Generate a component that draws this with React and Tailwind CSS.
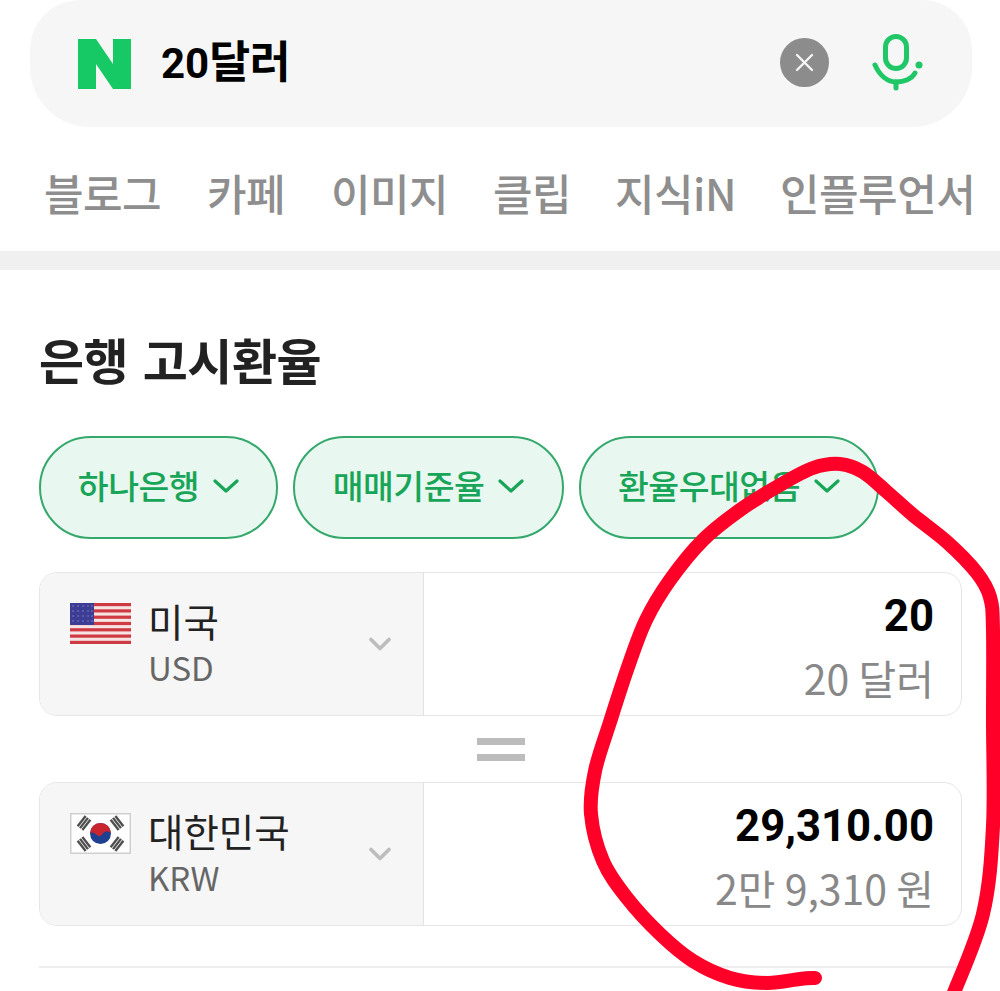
import React from 'react';
import { ChevronDown } from 'lucide-react';

const kr = "font-['Noto_Sans_CJK_KR','Noto_Sans',sans-serif]";
const num = "font-['Roboto','Noto_Sans_CJK_KR',sans-serif]";

const tabs = [
  { label: '블로그', w: 'w-[118px]' },
  { label: '카페', w: 'w-[79px]' },
  { label: '이미지', w: 'w-[117px]' },
  { label: '클립', w: 'w-[77px]' },
  { label: '지식iN', w: 'w-[120px]' },
  { label: '인플루언서', w: 'w-[198px]' },
];

// marker stroke, walked from its tail around the converter
const markerPoints = [
  [815, 978], [800, 979], [767, 983], [730, 978], [693, 961], [660, 934], [627, 898], [603, 861], [591, 814],
  [595, 771], [610, 722], [628, 667], [646, 620], [670, 580], [703, 540], [740, 510], [780, 485], [813, 468],
  [840, 464], [863, 472], [887, 492], [913, 515], [947, 542], [977, 573], [990, 597], [993, 630], [993, 720],
  [993, 826], [983, 914], [953, 995],
];

const smoothPath = (pts) => {
  let d = `M${pts[0][0]} ${pts[0][1]}`;
  for (let i = 0; i < pts.length - 1; i++) {
    const p0 = pts[i - 1] || pts[i];
    const p1 = pts[i];
    const p2 = pts[i + 1];
    const p3 = pts[i + 2] || p2;
    d += `C${p1[0] + (p2[0] - p0[0]) / 6} ${p1[1] + (p2[1] - p0[1]) / 6} ${p2[0] - (p3[0] - p1[0]) / 6} ${p2[1] - (p3[1] - p1[1]) / 6} ${p2[0]} ${p2[1]}`;
  }
  return d;
};

const NaverLogo = () => (
  <svg width="53" height="50" viewBox="0 0 53 50">
    <path fill="#17c964" d="M0 0h18l17 25V0h18v50H35L18 25v25H0z" />
  </svg>
);

const MicIcon = () => (
  <svg width="54" height="64" viewBox="0 0 54 64" fill="none" stroke="#1fc766" strokeLinecap="round" strokeWidth="5">
    <rect x="15.500" y="4.500" width="21" height="32" rx="10.500" />
    <path d="M5 33C10 44 18 50 26 50C34 50 42 47 45 41" />
    <path d="M26 50v6" />
    <circle cx="49" cy="33" r="3.500" fill="#1fc766" stroke="none" />
  </svg>
);

const ClearIcon = () => (
  <span className="mb-[3px] flex h-[49px] w-[49px] items-center justify-center rounded-full bg-[#8c8c8c]">
    <svg width="19" height="19" viewBox="0 0 19 19" stroke="#f5f5f5" strokeWidth="2.400" strokeLinecap="round">
      <path d="M2 2l15 15M17 2L2 17" />
    </svg>
  </span>
);

const UsFlag = () => (
  <svg width="61" height="41" viewBox="0 0 61 41" className="shrink-0">
    <rect width="61" height="41" fill="#f6e4e4" />
    {[0, 1, 2, 3, 4, 5, 6].map((i) => (
      <rect key={i} y={i * 6.300} width="61" height="3.200" fill="#cf3a42" />
    ))}
    <rect width="24" height="22" fill="#3d3d96" />
    {[3, 8, 13, 18].map((y) =>
      [3, 8, 13, 18, 22].map((x) => <circle key={`${x}-${y}`} cx={x} cy={y} r="0.900" fill="#6a6ab0" />)
    )}
  </svg>
);

const Trigram = ({ x, y, angle }) => (
  <g transform={`translate(${x} ${y}) rotate(${angle})`} fill="#4f4f4f">
    <rect x="-6.500" y="-4.200" width="13" height="2.400" />
    <rect x="-6.500" y="-1.200" width="13" height="2.400" />
    <rect x="-6.500" y="1.800" width="13" height="2.400" />
  </g>
);

const KrFlag = () => (
  <svg width="61" height="41" viewBox="0 0 61 41" className="shrink-0">
    <rect x="0.750" y="0.750" width="59.500" height="39.500" fill="#fff" stroke="#cfcfcf" strokeWidth="1.500" />
    <circle cx="30.500" cy="20.500" r="10.500" fill="#1f3f8f" />
    <path d="M20 20.500a10.500 10.500 0 0 1 21 0c-2.500-3-6-3-8 0s-5 3-7 1-3.500-3-6-1z" fill="#c9252f" />
    <Trigram x={14} y={10} angle={-52} />
    <Trigram x={47} y={10} angle={52} />
    <Trigram x={14} y={31} angle={52} />
    <Trigram x={47} y={31} angle={-52} />
  </svg>
);

const Pill = ({ label, w }) => (
  <button className={`flex h-[103px] items-center justify-center gap-[14px] rounded-full border-2 border-[#35a86c] bg-[#e8f7ef] pb-[4px] ${w}`}>
    <span className={`${kr} text-[33.500px] font-medium tracking-[-0.500px] text-[#18a558]`}>{label}</span>
    <svg width="26" height="16" viewBox="0 0 26 16" fill="none" stroke="#18a558" strokeWidth="3.200" strokeLinecap="round" strokeLinejoin="round">
      <path d="M2 3l11 10L24 3" />
    </svg>
  </button>
);

const CurrencyRow = ({ flag, name, code, value, reading }) => (
  <div className="flex h-[144px] overflow-hidden rounded-[18px] border-[1.500px] border-[#e6e6e6]">
    <div className="flex w-[384px] shrink-0 items-start border-r-[1.500px] border-[#e2e2e2] bg-[#f6f6f6] pl-[30px] pr-[25px] pt-[22px]">
      <div className="pt-[8px]">{flag}</div>
      <div className="ml-[17px] flex-1">
        <div className={`${kr} text-[38.500px] leading-[50px] text-[#222]`}>{name}</div>
        <div className={`${kr} text-[33px] leading-[44px] text-[#666]`}>{code}</div>
      </div>
      <ChevronDown size={36} strokeWidth={2.500} className="mt-[31px] text-[#bdbdbd]" />
    </div>
    <div className="flex flex-1 flex-col items-end pr-[27px] pt-[16px]">
      <div className={`${num} text-[43.700px] font-bold leading-[54px] text-black`}>{value}</div>
      <div className={`${kr} mt-[7px] text-[41px] leading-[54px] text-[#888888]`}>{reading}</div>
    </div>
  </div>
);

export default function App() {
  return (
    <div className="relative h-[991px] w-[1000px] overflow-hidden bg-white">
      <div className="pl-[30px] pr-[28px]">
        <div className="flex h-[127px] items-center rounded-[60px] rounded-t-[50px] bg-[#f6f6f6] pl-[48px] pr-[48px]">
          <NaverLogo />
          <span className="ml-[30px] mb-[6px] flex flex-1 items-baseline font-bold text-black">
            <span className={`${num} text-[42px]`}>20</span>
            <span className={`${kr} text-[44.500px] tracking-[-0.500px]`}>달러</span>
          </span>
          <ClearIcon />
          <span className="ml-[41px]"><MicIcon /></span>
        </div>
      </div>

      <nav className="flex h-[124px] items-center pl-[44px] pt-[6px]">
        {tabs.map((t) => (
          <span key={t.label} className={`${kr} mr-[45px] shrink-0 whitespace-nowrap text-[43px] font-medium tracking-[-0.500px] text-[#8e8e8e] last:mr-0 ${t.w}`}>
            {t.label}
          </span>
        ))}
      </nav>
      <div className="h-[19px] bg-[#f0f0f0]" />

      <section className="px-[39px]">
        <h2 className={`${kr} pt-[56px] text-[49px] font-semibold leading-[66px] tracking-[-0.500px] [word-spacing:4px] text-[#222]`}>은행 고시환율</h2>
        <div className="mt-[44px] flex gap-[15px]">
          <Pill label="하나은행" w="w-[239px]" />
          <Pill label="매매기준율" w="w-[271px]" />
          <Pill label="환율우대없음" w="w-[300px]" />
        </div>
        <div className="mt-[33px] w-[923px]">
          <CurrencyRow flag={<UsFlag />} name="미국" code="USD" value="20" reading="20 달러" />
          <div className="flex h-[66px] items-center justify-center">
            <div className="flex h-[23px] w-[48px] flex-col justify-between">
              <div className="h-[7px] bg-[#bcbcbc]" />
              <div className="h-[7px] bg-[#bcbcbc]" />
            </div>
          </div>
          <CurrencyRow flag={<KrFlag />} name="대한민국" code="KRW" value="29,310.00" reading="2만 9,310 원" />
        </div>
        <div className="mt-[40px] h-[1.500px] w-[923px] bg-[#eeeeee]" />
      </section>

      {/* hand-drawn marker circle over the converter */}
      <svg className="pointer-events-none absolute left-0 top-0" width="1000" height="991" viewBox="0 0 1000 991" fill="none">
        <path stroke="#ff0028" strokeWidth="14" strokeLinecap="round" strokeLinejoin="round" d={smoothPath(markerPoints)} />
      </svg>
    </div>
  );
}
